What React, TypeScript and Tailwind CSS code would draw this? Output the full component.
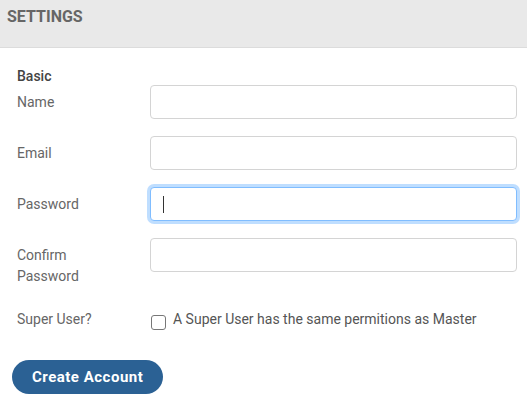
import React from 'react';

const Row = ({ label, children, top = false }: { label: React.ReactNode; children: React.ReactNode; top?: boolean }) => (
  <div className={`flex ${top ? 'items-start' : 'items-center'} pl-[5px]`}>
    <label className={`w-[133px] shrink-0 text-[14px] leading-[21px] text-[#666] ${top ? 'pt-[7px]' : ''}`}>{label}</label>
    <div className="flex-1">{children}</div>
  </div>
);

const Field = ({ type = 'text', focused = false }: { type?: string; focused?: boolean }) => (
  <div className="relative">
    <input
      type={type}
      className={`block h-[34px] w-full rounded-[4px] border bg-white px-3 outline-none ${
        focused ? 'border-[#80bdff] shadow-[0_0_0_3px_rgba(0,123,255,0.25)]' : 'border-[#d4d4d4]'
      }`}
    />
    {focused && <span className="absolute left-[13px] top-[9px] h-[17px] w-px bg-[#333]" />}
  </div>
);

export default function App() {
  return (
    <div className="min-h-[410px] w-full bg-white font-['Roboto',sans-serif]">
      <div className="h-[48px] border-b border-[#dcdcdc] bg-[#e9e9e9] px-[7px] pt-[6px]">
        <h1 className="text-[16px] font-bold leading-[22px] text-[#666]">SETTINGS</h1>
      </div>

      <div className="pl-[12px] pr-[10px] pt-[18px]">
        <div className="pl-[5px] text-[14px] font-medium leading-[21px] text-[#444]">Basic</div>
        <div className="mt-[-2px] flex flex-col gap-[17px]">
          <Row label="Name"><Field /></Row>
          <Row label="Email"><Field type="email" /></Row>
          <Row label="Password"><Field type="password" focused /></Row>
          <Row label={<>Confirm<br />Password</>} top><Field type="password" /></Row>
        </div>

        <div className="mt-[22px] flex items-start pl-[5px]">
          <span className="w-[133px] shrink-0 text-[14px] leading-[21px] text-[#666]">Super User?</span>
          <label className="flex items-start gap-[7px] pl-[1px]">
            <input
              type="checkbox"
              className="mt-[6px] h-[15px] w-[15px] shrink-0 appearance-none rounded-[3px] border border-[#777] bg-white"
            />
            <span className="text-[14px] leading-[21px] text-[#555]">A Super User has the same permitions as Master</span>
          </label>
        </div>

        <button className="mt-[30px] h-[34px] rounded-full bg-[#2b6194] px-[20px] text-[15px] font-bold tracking-[0.5px] text-white">
          Create Account
        </button>
      </div>
    </div>
  );
}
